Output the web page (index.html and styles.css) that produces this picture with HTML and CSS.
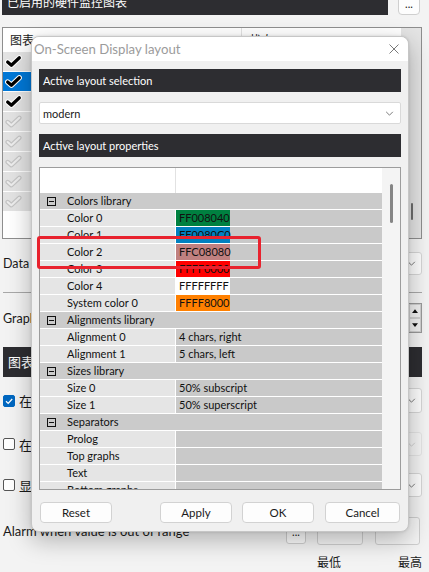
FILE: index.html
```html
<!DOCTYPE html>
<html>
<head>
<meta charset="utf-8">
<link rel="stylesheet" href="styles.css">
</head>
<body>
<div class="app">
  <div class="topbar">
    <div class="topbar-title">已启用的硬件监控图表</div>
    <div class="dots-btn">...</div>
  </div>

  <div class="listbox">
    <div class="lb-main">
      <div class="lb-header"><div class="lb-h1">图表</div><div class="lb-h2">状态</div></div>
      <div class="lb-row"><svg class="chk" viewBox="0 0 16 12"><path class="chk-halo" d="M2.5 6.5 L6 9.5 L13.5 2.5"/><path class="chk-ink" d="M2.5 6.5 L6 9.5 L13.5 2.5"/></svg></div>
      <div class="lb-row sel"><svg class="chk" viewBox="0 0 16 12"><path class="chk-halo" d="M2.5 6.5 L6 9.5 L13.5 2.5"/><path class="chk-ink" d="M2.5 6.5 L6 9.5 L13.5 2.5"/></svg></div>
      <div class="lb-row"><svg class="chk" viewBox="0 0 16 12"><path class="chk-halo" d="M2.5 6.5 L6 9.5 L13.5 2.5"/><path class="chk-ink" d="M2.5 6.5 L6 9.5 L13.5 2.5"/></svg></div>
      <div class="lb-row"><svg class="chk off" viewBox="0 0 16 12"><path class="chk-halo" d="M2.5 6.5 L6 9.5 L13.5 2.5"/><path class="chk-ink" d="M2.5 6.5 L6 9.5 L13.5 2.5"/></svg></div>
      <div class="lb-row"><svg class="chk off" viewBox="0 0 16 12"><path class="chk-halo" d="M2.5 6.5 L6 9.5 L13.5 2.5"/><path class="chk-ink" d="M2.5 6.5 L6 9.5 L13.5 2.5"/></svg></div>
      <div class="lb-row"><svg class="chk off" viewBox="0 0 16 12"><path class="chk-halo" d="M2.5 6.5 L6 9.5 L13.5 2.5"/><path class="chk-ink" d="M2.5 6.5 L6 9.5 L13.5 2.5"/></svg></div>
      <div class="lb-row"><svg class="chk off" viewBox="0 0 16 12"><path class="chk-halo" d="M2.5 6.5 L6 9.5 L13.5 2.5"/><path class="chk-ink" d="M2.5 6.5 L6 9.5 L13.5 2.5"/></svg></div>
      <div class="lb-row"><svg class="chk off" viewBox="0 0 16 12"><path class="chk-halo" d="M2.5 6.5 L6 9.5 L13.5 2.5"/><path class="chk-ink" d="M2.5 6.5 L6 9.5 L13.5 2.5"/></svg></div>
    </div>
    <div class="lb-scroll"><div class="lb-thumb"></div></div>
  </div>

  <div class="form">
    <div class="frow data-row">
      <span class="flabel">Data source</span>
      <div class="combo"><svg class="chev" viewBox="0 0 10 6"><path d="M1 1 L5 5 L9 1"/></svg></div>
    </div>
    <div class="sep"></div>
    <div class="frow grap-row">
      <span class="flabel">Graph limits</span>
      <div class="spin"><div class="spin-half"><svg viewBox="0 0 8 5"><path d="M0 5 L4 0 L8 5 Z"/></svg></div><div class="spin-half"><svg viewBox="0 0 8 5"><path d="M0 0 L4 5 L8 0 Z"/></svg></div></div>
    </div>
    <div class="darkbar2">图表</div>
    <div class="frow chk-row r1">
      <span class="cbox on"><svg viewBox="0 0 10 10"><path d="M2 5.2 L4.2 7.4 L8.2 3"/></svg></span><span class="cbl">在 OSD 显示</span>
      <div class="combo"><svg class="chev" viewBox="0 0 10 6"><path d="M1 1 L5 5 L9 1"/></svg></div>
    </div>
    <div class="frow chk-row r2">
      <span class="cbox"></span><span class="cbl">在 LCD 显示</span>
      <div class="combo dis"><svg class="chev" viewBox="0 0 10 6"><path d="M1 1 L5 5 L9 1"/></svg></div>
    </div>
    <div class="frow chk-row r3">
      <span class="cbox"></span><span class="cbl">显示在托盘</span>
      <div class="combo"><svg class="chev" viewBox="0 0 10 6"><path d="M1 1 L5 5 L9 1"/></svg></div>
    </div>
    <div class="alarm-row">
      <span class="alarm-text">Alarm when value is out of range</span>
      <span class="mini-btn">...</span>
      <span class="tbox"></span>
      <span class="tbox"></span>
    </div>
    <div class="limit-labels">
      <span class="lim1">最低</span>
      <span class="lim2">最高</span>
    </div>
  </div>
</div>

<div class="dialog">
  <div class="dlg-title">
    <span>On-Screen Display layout</span>
    <svg class="close" viewBox="0 0 10 10"><path d="M0.5 0.5 L9.5 9.5 M9.5 0.5 L0.5 9.5"/></svg>
  </div>
  <div class="dlg-body">
    <div class="dbar">Active layout selection</div>
    <div class="select">
      <span>modern</span>
      <svg class="chev" viewBox="0 0 10 6"><path d="M1 1 L5 5 L9 1"/></svg>
    </div>
    <div class="dbar">Active layout properties</div>
    <div class="pg">
      <div class="pg-main">
        <div class="pg-head"><div class="ph1"></div><div class="ph2"></div></div>

        <div class="pg-row group"><span class="exp"></span><span>Colors library</span></div>
        <div class="pg-row"><span class="pg-name">Color 0</span><span class="pg-val"><span class="swatch sw-green">FF008040</span></span></div>
        <div class="pg-row"><span class="pg-name">Color 1</span><span class="pg-val"><span class="swatch sw-blue">FF0080C0</span></span></div>
        <div class="pg-row"><span class="pg-name">Color 2</span><span class="pg-val"><span class="swatch sw-rose">FFC08080</span></span></div>
        <div class="pg-row"><span class="pg-name">Color 3</span><span class="pg-val"><span class="swatch sw-red">FFFF0000</span></span></div>
        <div class="pg-row"><span class="pg-name">Color 4</span><span class="pg-val"><span class="swatch sw-white">FFFFFFFF</span></span></div>
        <div class="pg-row"><span class="pg-name">System color 0</span><span class="pg-val"><span class="swatch sw-orange">FFFF8000</span></span></div>

        <div class="pg-row group"><span class="exp"></span><span>Alignments library</span></div>
        <div class="pg-row"><span class="pg-name">Alignment 0</span><span class="pg-val txt">4 chars, right</span></div>
        <div class="pg-row"><span class="pg-name">Alignment 1</span><span class="pg-val txt">5 chars, left</span></div>

        <div class="pg-row group"><span class="exp"></span><span>Sizes library</span></div>
        <div class="pg-row"><span class="pg-name">Size 0</span><span class="pg-val txt">50% subscript</span></div>
        <div class="pg-row"><span class="pg-name">Size 1</span><span class="pg-val txt">50% superscript</span></div>

        <div class="pg-row group"><span class="exp"></span><span>Separators</span></div>
        <div class="pg-row"><span class="pg-name">Prolog</span><span class="pg-val txt"></span></div>
        <div class="pg-row"><span class="pg-name">Top graphs</span><span class="pg-val txt"></span></div>
        <div class="pg-row"><span class="pg-name">Text</span><span class="pg-val txt"></span></div>
        <div class="pg-row"><span class="pg-name">Bottom graphs</span><span class="pg-val txt"></span></div>
      </div>
      <div class="pg-scroll"><div class="pg-thumb"></div></div>
    </div>
    <div class="btnrow">
      <div class="btn reset">Reset</div>
      <div class="btn apply">Apply</div>
      <div class="btn ok">OK</div>
      <div class="btn cancel">Cancel</div>
    </div>
  </div>
</div>

<div class="redmark"></div>
</body>
</html>
```

FILE: styles.css
```css
* { box-sizing: border-box; }
html, body { margin: 0; padding: 0; }
body {
  width: 429px;
  height: 572px;
  overflow: hidden;
  position: relative;
  background: #f3f3f3;
  font-family: Lato, "Noto Sans CJK SC", sans-serif;
  font-size: 12px;
  color: #1a1a1a;
}

/* ---------- background window ---------- */
.app { padding-left: 2px; width: 429px; }

.topbar { display: flex; margin-top: -12px; height: 27px; }
.topbar-title {
  width: 386px;
  height: 27px;
  background: #2d2d31;
  color: #fff;
  line-height: 27px;
  padding-left: 5px;
  font-family: "Noto Sans CJK SC", sans-serif;
  font-size: 12px;
}
.dots-btn {
  margin-left: 10px;
  width: 22px;
  height: 27px;
  background: #fdfdfd;
  border: 1px solid #cfcfcf;
  border-radius: 0 0 4px 4px;
  text-align: center;
  line-height: 30px;
  font-size: 11px;
}

.listbox {
  margin-top: 12px;
  width: 420px;
  height: 212px;
  border: 1px solid #8e8e8e;
  background: #fff;
  display: flex;
}
.lb-main { flex: 1; }
.lb-header { height: 24px; display: flex; background: #fff; font-family: "Noto Sans CJK SC", sans-serif; font-size: 12px; }
.lb-h1 { width: 239px; padding-left: 7px; line-height: 24px; border-right: 1px solid #e2e2e2; }
.lb-h2 { padding-left: 7px; line-height: 24px; }
.lb-row { height: 20px; background: #e3e3e3; border-bottom: 1px solid #fff; display: flex; align-items: center; padding-left: 2px; }
.lb-row.sel { background: #0078d7; }
.chk { width: 17px; height: 13px; }
.chk path { fill: none; stroke-linecap: round; stroke-linejoin: round; }
.chk-halo { stroke: #fff; stroke-width: 5; }
.chk-ink { stroke: #000; stroke-width: 3; }
.chk.off .chk-halo { stroke: #c4c4c4; stroke-width: 4.2; }
.chk.off .chk-ink { stroke: #ededed; stroke-width: 2; }
.lb-scroll { width: 20px; background: #e4e4e4; padding-top: 175px; padding-left: 10px; }
.lb-thumb { width: 2px; height: 17px; background: #6e6e6e; border-radius: 1px; }

.form { margin-top: 13px; padding-left: 1px; width: 420px; }
.frow { display: flex; align-items: center; justify-content: space-between; }
.flabel { font-size: 12.5px; white-space: nowrap; }
.data-row { height: 23px; }
.combo {
  width: 300px;
  height: 100%;
  background: #fdfdfd;
  border: 1px solid #d6d6d6;
  border-radius: 3px;
  display: flex;
  align-items: center;
  justify-content: flex-end;
  padding-right: 5px;
  flex-shrink: 0;
}
.combo.dis { background: #f5f5f5; border-color: #e4e4e4; }
.combo.dis .chev path { stroke: #c8c8c8; }
.chev { width: 9px; height: 5px; }
.chev path { fill: none; stroke: #606060; stroke-width: 1; }
.sep { margin-top: 17px; height: 1px; background: #a8a8a8; }
.grap-row { margin-top: 10px; height: 30px; }
.spin { width: 14px; height: 30px; border: 1px solid #9a9a9a; display: flex; flex-direction: column; background: #f0f0f0; }
.spin-half { flex: 1; display: flex; align-items: center; justify-content: center; border: 1px solid #d0d0d0; }
.spin-half svg { width: 6px; height: 4px; }
.spin-half path { fill: #111; }
.darkbar2 {
  margin-top: 14px;
  height: 30px;
  background: #2d2d31;
  color: #fff;
  line-height: 30px;
  padding-left: 5px;
  font-family: "Noto Sans CJK SC", sans-serif;
  font-size: 13px;
}
.chk-row { height: 25px; }
.chk-row.r1 { margin-top: 11px; }
.chk-row.r2 { margin-top: 19px; height: 24px; }
.chk-row.r3 { margin-top: 17px; height: 24px; }
.cbox { width: 12px; height: 12px; border: 1px solid #555; border-radius: 2px; background: #fff; display: flex; align-items: center; justify-content: center; flex-shrink: 0; }
.cbox.on { background: #0067c0; border-color: #0067c0; }
.cbox svg { width: 10px; height: 10px; }
.cbox path { fill: none; stroke: #fff; stroke-width: 1.3; }
.cbl { flex: 1; padding-left: 4px; font-family: "Noto Sans CJK SC", sans-serif; font-size: 13px; white-space: nowrap; }
.chk-row .combo { width: 200px; }

.alarm-row { margin-top: 20px; height: 28px; display: flex; align-items: flex-start; }
.alarm-text { width: 283px; padding-top: 6px; font-size: 13px; white-space: nowrap; flex-shrink: 0; }
.mini-btn { width: 20px; height: 19px; margin-top: 8px; border: 1px solid #cfcfcf; border-radius: 3px; background: #fdfdfd; text-align: center; line-height: 12px; font-size: 11px; flex-shrink: 0; }
.tbox { height: 28px; border: 1px solid #cfcfcf; border-radius: 3px; background: #f5f5f5; flex-shrink: 0; }
.alarm-row .tbox { width: 46px; margin-left: 11px; }
.alarm-row .tbox + .tbox { width: 45px; margin-left: 12px; }
.limit-labels { margin-top: 9px; height: 16px; display: flex; font-family: "Noto Sans CJK SC", sans-serif; font-size: 12px; line-height: 16px; white-space: nowrap; }
.lim1 { margin-left: 314px; flex-shrink: 0; }
.lim2 { margin-left: 57px; flex-shrink: 0; }

/* ---------- dialog ---------- */
.dialog {
  position: absolute;
  left: 31px;
  top: 36px;
  width: 378px;
  height: 496px;
  border: 1px solid #c6c6c6;
  border-radius: 8px;
  background: #f0f0f0;
  box-shadow: 0 8px 24px rgba(0, 0, 0, 0.28), 0 0 3px rgba(0, 0, 0, 0.12);
  overflow: hidden;
  display: flex;
  flex-direction: column;
}
.dlg-title {
  height: 24px;
  background: #fff;
  display: flex;
  align-items: center;
  justify-content: space-between;
  padding: 0 9px 0 2px;
  color: #9b9b9b;
  font-size: 13.2px;
}
.close { width: 10px; height: 10px; }
.close path { stroke: #7a7a7a; stroke-width: 1; fill: none; }
.dlg-body { padding: 8px 7px 0 7px; display: flex; flex-direction: column; }
.dbar {
  height: 23px;
  background: #2d2d31;
  color: #fff;
  line-height: 23px;
  padding-left: 4px;
  font-size: 11px;
  margin-bottom: 10px;
}
.select {
  height: 22px;
  background: #fff;
  border: 1px solid #d9d9d9;
  border-radius: 2px;
  display: flex;
  align-items: center;
  justify-content: space-between;
  padding: 0 6px 0 3px;
  font-size: 11px;
  margin-bottom: 10px;
}
.pg {
  height: 323px;
  border: 1px solid #9c9c9c;
  background: #fff;
  display: flex;
  font-size: 11px;
  color: #111;
}
.pg-main { flex: 1; overflow: hidden; }
.pg-head { height: 25px; display: flex; background: #fff; }
.ph1 { width: 136px; border-right: 1px solid #e2e2e2; }
.pg-row { height: 17px; border-bottom: 1px solid #fff; display: flex; line-height: 16px; white-space: nowrap; }
.pg-row.group { background: #cbcbcb; align-items: center; }
.exp {
  width: 9px;
  height: 9px;
  border: 1px solid #111;
  margin-left: 7px;
  margin-right: 11px;
  display: flex;
  align-items: center;
  justify-content: center;
}
.exp::after { content: ""; width: 5px; height: 1px; background: #111; }
.pg-name { width: 136px; background: #e5e5e5; border-right: 1px solid #fff; padding-left: 27px; }
.pg-val { flex: 1; background: #c9c9c9; display: flex; }
.pg-val.txt { padding-left: 3px; }
.swatch { width: 54px; padding-left: 3px; }
.sw-green { background: #008040; }
.sw-blue { background: #0080c0; }
.sw-rose { background: #c08080; }
.sw-red { background: #ff0000; }
.sw-white { background: #ffffff; }
.sw-orange { background: #ff8000; }
.pg-scroll { width: 18px; background: #f4f4f4; padding-top: 16px; padding-left: 8px; }
.pg-thumb { width: 3px; height: 39px; background: #858585; border-radius: 2px; }

.btnrow { margin-top: 12px; height: 21px; display: flex; }
.btn {
  height: 21px;
  width: 72px;
  border: 1px solid #d2d2d2;
  border-radius: 4px;
  background: #fdfdfd;
  display: flex;
  align-items: center;
  justify-content: center;
  font-size: 11.5px;
}
.btn.reset { margin-left: 1px; }
.btn.apply { margin-left: 48px; }
.btn.ok { margin-left: 10px; }
.btn.cancel { margin-left: 11px; width: 75px; }

/* ---------- annotation ---------- */
.redmark {
  position: absolute;
  left: 37px;
  top: 236px;
  width: 224px;
  height: 33px;
  border: 3px solid #e8222e;
  border-radius: 3px;
}
```
